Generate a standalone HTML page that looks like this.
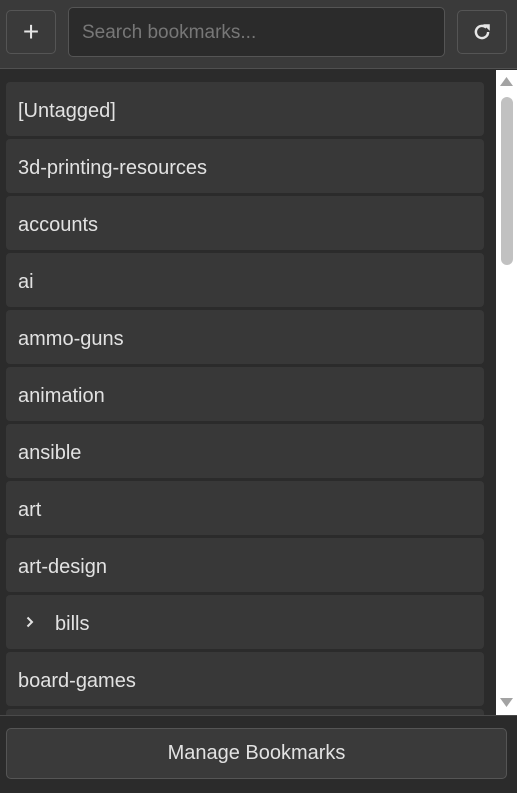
<!DOCTYPE html>
<html><head><style>
*{box-sizing:border-box;margin:0;padding:0}
body{width:517px;height:793px;background:#2b2b2b;font-family:"Liberation Sans",sans-serif;overflow:hidden;position:relative}
.hdr{position:absolute;left:0;top:0;width:517px;height:69px;background:#3a3a3a;border-bottom:1px solid #505050}
.btn{position:absolute;border:1px solid #555;border-radius:5px;background:#3a3a3a;color:#e6e6e6;display:flex;align-items:center;justify-content:center}
.search{position:absolute;left:68px;top:7px;width:377px;height:50px;background:#2b2b2b;border:1px solid #555;border-radius:5px;color:#777;font-size:19px;padding-left:13px;line-height:50px}
.list{position:absolute;left:0;top:70px;width:496px;height:645px;overflow:hidden}
.item{position:absolute;left:6px;width:478px;height:54px;background:#383838;border-radius:4px;color:#e2e2e2;font-size:20px;line-height:58px;padding-left:12px}
.sb{position:absolute;left:496px;top:70px;width:21px;height:645px;background:#fff}
.foot{position:absolute;left:0;top:715px;width:517px;height:78px;background:#2b2b2b;border-top:1px solid #4a4a4a}
</style></head><body>
<div class="hdr">
<div class="btn" style="left:6px;top:10px;width:50px;height:44px;font-size:28px;font-weight:300">+</div>
<div class="search">Search bookmarks...</div>
<div class="btn" style="left:457px;top:10px;width:50px;height:44px">
<svg width="20" height="20" viewBox="0 0 18 18"><path d="M14.5 9a5.5 5.5 0 1 1-1.6-3.9" fill="none" stroke="#e6e6e6" stroke-width="2.2"/><path d="M10 2h6v6z" fill="#e6e6e6"/></svg></div>
</div>
<div class="list">
<div class="item" style="top:12px">[Untagged]</div>
<div class="item" style="top:69px">3d-printing-resources</div>
<div class="item" style="top:126px">accounts</div>
<div class="item" style="top:183px">ai</div>
<div class="item" style="top:240px">ammo-guns</div>
<div class="item" style="top:297px">animation</div>
<div class="item" style="top:354px">ansible</div>
<div class="item" style="top:411px">art</div>
<div class="item" style="top:468px">art-design</div>
<div class="item" style="top:525px"><svg style="position:absolute;left:20px;top:21px" width="8" height="12"><path d="M1.5 1.5L6 6l-4.5 4.5" fill="none" stroke="#e2e2e2" stroke-width="2"/></svg><span style="padding-left:37px">bills</span></div>
<div class="item" style="top:582px">board-games</div>
<div class="item" style="top:639px"></div>
</div>
<div class="sb">
<svg style="position:absolute;left:4px;top:7px" width="13" height="9"><path d="M6.5 0L13 9H0z" fill="#a3a3a3"/></svg>
<div style="position:absolute;left:5px;top:27px;width:12px;height:168px;background:#c1c1c1;border-radius:6px"></div>
<svg style="position:absolute;left:4px;top:628px" width="13" height="9"><path d="M0 0h13L6.5 9z" fill="#a3a3a3"/></svg>
</div>
<div class="foot">
<div class="btn" style="left:6px;top:12px;width:501px;height:51px;font-size:20px;color:#e2e2e2">Manage Bookmarks</div>
</div>
</body></html>
